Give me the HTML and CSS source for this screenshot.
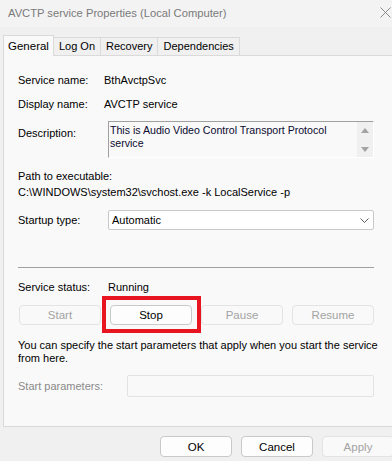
FILE: index.html
```html
<!DOCTYPE html>
<html lang="en">
<head>
    <meta charset="UTF-8">
    <title>AVCTP service Properties</title>
    <link rel="stylesheet" href="styles.css">
</head>
<body>
    <div class="title-bar">
        <span class="title-text">AVCTP service Properties (Local Computer)</span>
        <svg class="close-icon" width="11" height="11" viewBox="0 0 11 11">
            <path d="M0.5 0.5 L10.5 10.5 M10.5 0.5 L0.5 10.5" stroke="#8a8a8a" stroke-width="1" fill="none"/>
        </svg>
    </div>

    <div class="tabs">
        <div class="tab active">General</div>
        <div class="tab">Log On</div>
        <div class="tab">Recovery</div>
        <div class="tab">Dependencies</div>
    </div>

    <div class="panel">
        <div class="content">
            <div class="row first">
                <span class="label">Service name:</span>
                <span class="value">BthAvctpSvc</span>
            </div>
            <div class="row">
                <span class="label">Display name:</span>
                <span class="value">AVCTP service</span>
            </div>
            <div class="row desc-row">
                <span class="label desc-label">Description:</span>
                <div class="textbox">
                    <div class="textbox-text">This is Audio Video Control Transport Protocol service</div>
                    <div class="scrollbar">
                        <span class="arrow up"></span>
                        <span class="arrow down"></span>
                    </div>
                </div>
            </div>
            <div class="path-block">
                <div>Path to executable:</div>
                <div>C:\WINDOWS\system32\svchost.exe -k LocalService -p</div>
            </div>
            <div class="row select-row">
                <span class="label">Startup type:</span>
                <div class="select">
                    <span>Automatic</span>
                    <svg width="9" height="5" viewBox="0 0 9 5">
                        <path d="M0.5 0.5 L4.5 4.5 L8.5 0.5" stroke="#606060" stroke-width="1" fill="none"/>
                    </svg>
                </div>
            </div>

            <hr class="separator">

            <div class="row status-row">
                <span class="label">Service status:</span>
                <span class="value status">Running</span>
            </div>
            <div class="btn-grid">
                <button class="btn disabled">Start</button>
                <div class="highlight-wrap">
                    <button class="btn">Stop</button>
                    <div class="highlight"></div>
                </div>
                <button class="btn disabled">Pause</button>
                <button class="btn disabled">Resume</button>
            </div>
            <p class="note">You can specify the start parameters that apply when you start the service from here.</p>
            <div class="row params-row">
                <span class="label dim">Start parameters:</span>
                <div class="param-input"></div>
            </div>
        </div>
    </div>

    <div class="footer">
        <button class="btn footer-btn">OK</button>
        <button class="btn footer-btn">Cancel</button>
        <button class="btn footer-btn disabled">Apply</button>
    </div>
</body>
</html>
```

FILE: styles.css
```css
body {
    margin: 0;
    width: 392px;
    height: 461px;
    overflow: hidden;
    background-color: #f0f0f0;
    font-family: "Liberation Sans", Arial, sans-serif;
    font-size: 11px;
    color: #000;
}
.title-bar {
    height: 27px;
    background-color: #f3f3f3;
    display: flex;
    justify-content: space-between;
    align-items: center;
    padding: 0 1px 0 8px;
}
.title-text {
    color: #7a7a7a;
    font-size: 11.2px;
    margin-top: -1px;
}
.close-icon {
    margin-top: -3px;
}
.tabs {
    display: flex;
    align-items: flex-end;
    height: 28px;
    margin-left: 3px;
}
.tab {
    height: 17px;
    line-height: 17px;
    padding: 0 5px;
    border: 1px solid #dadada;
    border-bottom: none;
    border-left: none;
    background-color: #f0f0f0;
}
.tab.active {
    height: 20px;
    line-height: 20px;
    padding: 0 4px;
    border-left: 1px solid #dadada;
    background-color: #f9f9f9;
    position: relative;
    top: 1px;
    font-size: 11.5px;
}
.panel {
    margin-left: 3px;
    width: 400px;
    height: 372px;
    box-sizing: border-box;
    border: 1px solid #dadada;
    background-color: #f9f9f9;
}
.content {
    width: 356px;
    padding-left: 14px;
}
.row {
    display: flex;
    align-items: center;
    height: 16px;
    margin-top: 8px;
}
.row.first {
    margin-top: 16px;
}
.label {
    width: 86px;
    flex-shrink: 0;
}
.desc-row {
    height: 37px;
    margin-top: 9px;
    align-items: flex-start;
}
.desc-label {
    width: 90px;
    padding-top: 6px;
}
.textbox {
    flex: 1;
    height: 37px;
    box-sizing: border-box;
    border-top: 1px solid #a0a0a0;
    border-left: 1px solid #a0a0a0;
    border-right: 1px solid #fff;
    border-bottom: 1px solid #fff;
    background-color: #f9f9f9;
    display: flex;
    font-size: 10.6px;
}
.textbox-text {
    flex: 1;
    padding: 2px 0 0 1px;
    line-height: 13px;
    color: #0a0a30;
}
.scrollbar {
    width: 16px;
    background-color: #f0f0f0;
    display: flex;
    flex-direction: column;
    justify-content: space-between;
    align-items: center;
    padding: 6px 0 5px;
    box-sizing: border-box;
}
.arrow {
    width: 0;
    height: 0;
    border-left: 4px solid transparent;
    border-right: 4px solid transparent;
}
.arrow.up {
    border-bottom: 5px solid #a3a3a3;
}
.arrow.down {
    border-top: 5px solid #a3a3a3;
}
.path-block {
    margin-top: 10px;
    line-height: 16px;
}
.select-row {
    height: 20px;
    margin-top: 10px;
}
.select-row .label {
    width: 90px;
}
.select {
    flex: 1;
    height: 20px;
    box-sizing: border-box;
    border: 1px solid #c8c8c8;
    border-radius: 2px;
    background-color: #fff;
    display: flex;
    justify-content: space-between;
    align-items: center;
    padding: 0 4px 0 3px;
}
.separator {
    border: none;
    border-top: 1px solid #a0a0a0;
    margin: 37px 0 0;
}
.status-row {
    margin-top: 11px;
}
.status-row .label {
    width: 90px;
}
.btn-grid {
    display: grid;
    grid-template-columns: repeat(4, 1fr);
    column-gap: 9px;
    margin-top: 10px;
    padding-left: 1px;
}
.btn {
    height: 20px;
    box-sizing: border-box;
    border: 1px solid #c9c9c9;
    border-radius: 4px;
    background-color: #fdfdfd;
    font-family: "Liberation Sans", Arial, sans-serif;
    font-size: 11.5px;
    color: #000;
    padding: 0;
    width: 100%;
}
.btn.disabled {
    border-color: #e3e3e3;
    background-color: #f9f9f9;
    color: #a3a3a3;
}
.highlight-wrap {
    position: relative;
}
.highlight {
    position: absolute;
    left: -8px;
    top: -9px;
    width: 99px;
    height: 37px;
    box-sizing: border-box;
    border: 4px solid #e8141f;
}
.note {
    margin: 14px -16px 0 0;
    line-height: 13px;
}
.params-row {
    height: 22px;
    margin-top: 10px;
}
.params-row .label {
    width: 109px;
}
.dim {
    color: #8a8a8a;
}
.param-input {
    flex: 1;
    height: 22px;
    box-sizing: border-box;
    border: 1px solid #e3e3e3;
    border-radius: 2px;
    background-color: #f9f9f9;
}
.footer {
    display: flex;
    gap: 9px;
    margin-top: 9px;
    padding-left: 160px;
}
.footer-btn {
    width: 72px;
    height: 21px;
    flex-shrink: 0;
}
```
